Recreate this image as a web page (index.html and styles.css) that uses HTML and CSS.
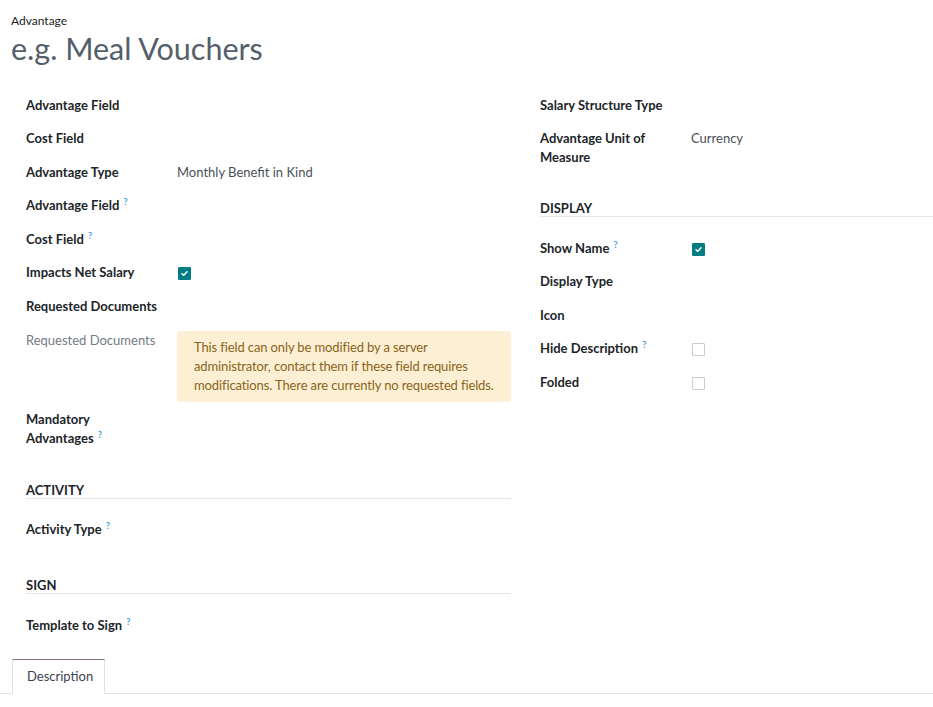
FILE: index.html
```html
<!DOCTYPE html>
<html>
<head>
<meta charset="utf-8">
<link rel="stylesheet" href="styles.css">
</head>
<body>
<div class="sheet">
  <div class="title-block">
    <div class="title-label">Advantage</div>
    <h1 class="title">e.g. Meal Vouchers</h1>
  </div>

  <div class="groups">
    <div class="col">
      <div class="row"><div class="lbl">Advantage Field</div><div class="val"></div></div>
      <div class="row"><div class="lbl">Cost Field</div><div class="val"></div></div>
      <div class="row"><div class="lbl">Advantage Type</div><div class="val">Monthly Benefit in Kind</div></div>
      <div class="row"><div class="lbl">Advantage Field <sup class="help">?</sup></div><div class="val"></div></div>
      <div class="row"><div class="lbl">Cost Field <sup class="help">?</sup></div><div class="val"></div></div>
      <div class="row"><div class="lbl">Impacts Net Salary</div><div class="val"><span class="cb checked"><svg viewBox="0 0 12 12" width="12" height="12"><path d="M3.2 6.2 L5.2 8 L8.8 4.2" fill="none" stroke="#fff" stroke-width="1.6" stroke-linecap="round" stroke-linejoin="round"/></svg></span></div></div>
      <div class="row"><div class="lbl">Requested Documents</div><div class="val"></div></div>
      <div class="row row-alert"><div class="lbl muted">Requested Documents</div><div class="val"><div class="alert">This field can only be modified by a server administrator, contact them if these field requires modifications. There are currently no requested fields.</div></div></div>
      <div class="row row-two"><div class="lbl">Mandatory<br>Advantages <sup class="help">?</sup></div><div class="val"></div></div>

      <div class="sep">ACTIVITY</div>
      <div class="row"><div class="lbl">Activity Type <sup class="help">?</sup></div><div class="val"></div></div>

      <div class="sep sep-sign">SIGN</div>
      <div class="row"><div class="lbl">Template to Sign <sup class="help">?</sup></div><div class="val"></div></div>
    </div>

    <div class="col">
      <div class="row"><div class="lbl">Salary Structure Type</div><div class="val"></div></div>
      <div class="row row-two"><div class="lbl">Advantage Unit of Measure</div><div class="val">Currency</div></div>

      <div class="sep sep-right">DISPLAY</div>
      <div class="row"><div class="lbl">Show Name <sup class="help">?</sup></div><div class="val"><span class="cb checked"><svg viewBox="0 0 12 12" width="12" height="12"><path d="M3.2 6.2 L5.2 8 L8.8 4.2" fill="none" stroke="#fff" stroke-width="1.6" stroke-linecap="round" stroke-linejoin="round"/></svg></span></div></div>
      <div class="row"><div class="lbl">Display Type</div><div class="val"></div></div>
      <div class="row"><div class="lbl">Icon</div><div class="val"></div></div>
      <div class="row"><div class="lbl">Hide Description <sup class="help">?</sup></div><div class="val"><span class="cb"></span></div></div>
      <div class="row"><div class="lbl">Folded</div><div class="val"><span class="cb"></span></div></div>
    </div>
  </div>

  <div class="tabs">
    <div class="tab active">Description</div>
  </div>
</div>
</body>
</html>
```

FILE: styles.css
```css
html, body {
  margin: 0;
  padding: 0;
  background: #fff;
  overflow: hidden;
}
body {
  font-family: "Lato", "Open Sans", sans-serif;
  font-size: 13px;
  line-height: 19.5px;
  color: #212529;
}
.sheet {
  width: 933px;
  overflow: hidden;
}
.title-block {
  padding: 12px 0 0 11px;
}
.title-label {
  font-size: 12px;
  line-height: 18px;
  color: #212529;
}
.title {
  margin: 0;
  font-size: 30.5px;
  font-weight: 400;
  line-height: 37px;
  color: #555e6b;
}
.groups {
  display: grid;
  grid-template-columns: 485px 485px;
  column-gap: 29px;
  padding-left: 26px;
  margin-top: 28.5px;
}
.col {
  display: flex;
  flex-direction: column;
}
.row {
  display: grid;
  grid-template-columns: 151px 1fr;
  padding-bottom: 14.1px;
}
.row-two .lbl {
  line-height: 19px;
}
.row-alert {
  padding-bottom: 8px;
}
.lbl {
  font-weight: 700;
  color: #212529;
  padding-right: 10px;
}
.lbl.muted {
  font-weight: 400;
  color: #757b85;
}
.val {
  color: #4a4f57;
  display: flex;
  align-items: flex-start;
}
.help {
  font-size: 9px;
  font-weight: 700;
  color: #41a0d9;
  vertical-align: top;
  position: relative;
  top: -4px;
  margin-left: 1px;
}
.cb {
  display: inline-block;
  width: 11px;
  height: 11px;
  border: 1px solid #c9cdd2;
  border-radius: 1px;
  margin-top: 4px;
  margin-left: 1px;
  background: #fff;
}
.cb.checked {
  background: #017e84;
  border-color: #017e84;
}
.cb svg {
  display: block;
  width: 11px;
  height: 11px;
}
.alert {
  background: #fcefd4;
  color: #8a6418;
  border-radius: 4px;
  padding: 7px 5px 7px 17px;
  line-height: 19px;
  letter-spacing: -0.12px;
  width: 100%;
  box-sizing: border-box;
}
.sep {
  font-weight: 700;
  line-height: 16px;
  border-bottom: 1px solid #e3e6ea;
  margin-top: 20px;
  margin-bottom: 21.5px;
  color: #212529;
}
.sep-sign {
  margin-top: 23.5px;
}
.sep-right {
  margin-top: 19px;
}
.tabs {
  display: flex;
  border-bottom: 1px solid #dee2e6;
  padding-left: 12px;
  margin-top: 9.5px;
}
.tab {
  border: 1px solid #dee2e6;
  border-top: 1px solid #8b6a83;
  border-bottom: 1px solid #fff;
  margin-bottom: -1px;
  padding: 7px 14px;
  width: 93px;
  box-sizing: border-box;
  color: #3c4350;
  font-size: 13px;
  line-height: 19px;
  background: #fff;
}
```
